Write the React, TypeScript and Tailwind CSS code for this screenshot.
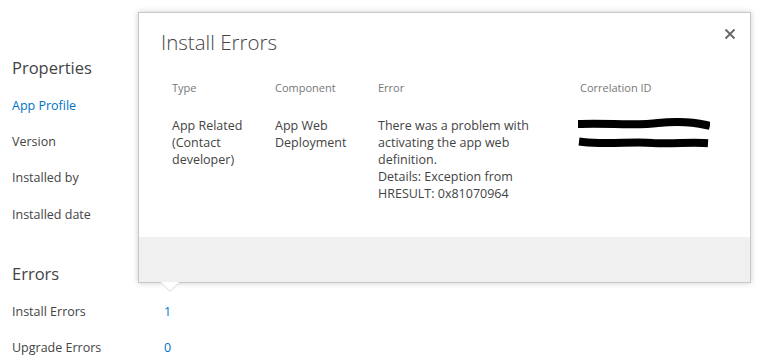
import React from 'react';

const font = { fontFamily: '"Segoe UI", "Open Sans", "Liberation Sans", sans-serif' };

export default function App() {
    const properties = ['App Profile', 'Version', 'Installed by', 'Installed date'];

    return (
        <div className="relative w-[768px] h-[363px] bg-white overflow-hidden text-[#444]" style={font}>
            {/* left panel */}
            <div className="pl-3 pt-[56px]">
                <h2 className="text-[16.5px] leading-6 font-normal text-[#444]">Properties</h2>
                <div className="mt-[8px]">
                    {properties.map((p, i) => (
                        <div key={p} className="h-[36.3px] flex items-center text-[12.5px]">
                            <span className={i === 0 ? 'text-[#0072c6]' : 'text-[#444]'}>{p}</span>
                        </div>
                    ))}
                </div>

                <h2 className="mt-[29px] text-[16.5px] leading-6 font-normal text-[#444]">Errors</h2>
                <div className="mt-[8px]">
                    <div className="h-9 flex items-center text-[12.5px]">
                        <span className="w-[152px]">Install Errors</span>
                        <span className="text-[#0072c6]">1</span>
                    </div>
                    <div className="h-9 flex items-center text-[12.5px]">
                        <span className="w-[152px]">Upgrade Errors</span>
                        <span className="text-[#0072c6]">0</span>
                    </div>
                </div>
            </div>

            {/* callout */}
            <div className="absolute left-[138px] top-[12px] w-[613px] h-[271px] bg-white border border-[#c8c8c8] shadow-[0_0_6px_rgba(0,0,0,0.2)] flex flex-col">
                <div className="flex-1 relative">
                    <button className="absolute right-[14px] top-[15px] text-[#666]">
                        <svg width="12" height="12" viewBox="0 0 12 12">
                            <path d="M1.5 1.5 L10.5 10.5 M10.5 1.5 L1.5 10.5" stroke="#666" strokeWidth="1.8" />
                        </svg>
                    </button>
                    <h1 className="pl-[22px] pt-[15px] text-[20.5px] leading-7 font-light text-[#444]">Install Errors</h1>

                    <div className="pl-[33px] mt-[24px] text-[11px] text-[#777] flex leading-4">
                        <div className="w-[103px]">Type</div>
                        <div className="w-[103px]">Component</div>
                        <div className="w-[202px]">Error</div>
                        <div>Correlation ID</div>
                    </div>

                    <div className="pl-[33px] mt-[21px] text-[12.5px] leading-[17px] text-[#444] flex">
                        <div className="w-[103px]">App Related<br />(Contact<br />developer)</div>
                        <div className="w-[103px]">App Web<br />Deployment</div>
                        <div className="w-[202px]">
                            There was a problem with<br />activating the app web<br />definition.<br />Details: Exception from<br />HRESULT: 0x81070964
                        </div>
                        <div className="pt-[1px] -ml-[2px]">
                            <svg width="132" height="34" viewBox="0 0 132 34">
                                <path d="M3 6 C30 5, 60 8, 80 5 C100 3, 115 4, 128 7" stroke="#000" strokeWidth="8" fill="none" strokeLinecap="square" />
                                <path d="M5 24 C30 27, 55 23, 75 25 C95 26, 110 24, 126 25" stroke="#000" strokeWidth="8" fill="none" strokeLinecap="square" />
                            </svg>
                        </div>
                    </div>
                </div>
                <div className="h-[45px] bg-[#f0f0f0]" />

                {/* pointer */}
                <div className="absolute left-[21px] -bottom-[10px] w-0 h-0 border-l-[10px] border-r-[10px] border-t-[10px] border-l-transparent border-r-transparent border-t-[#d8d8d8]" />
                <div className="absolute left-[22px] -bottom-[9px] w-0 h-0 border-l-[9px] border-r-[9px] border-t-[9px] border-l-transparent border-r-transparent border-t-white" />
            </div>
        </div>
    );
}
